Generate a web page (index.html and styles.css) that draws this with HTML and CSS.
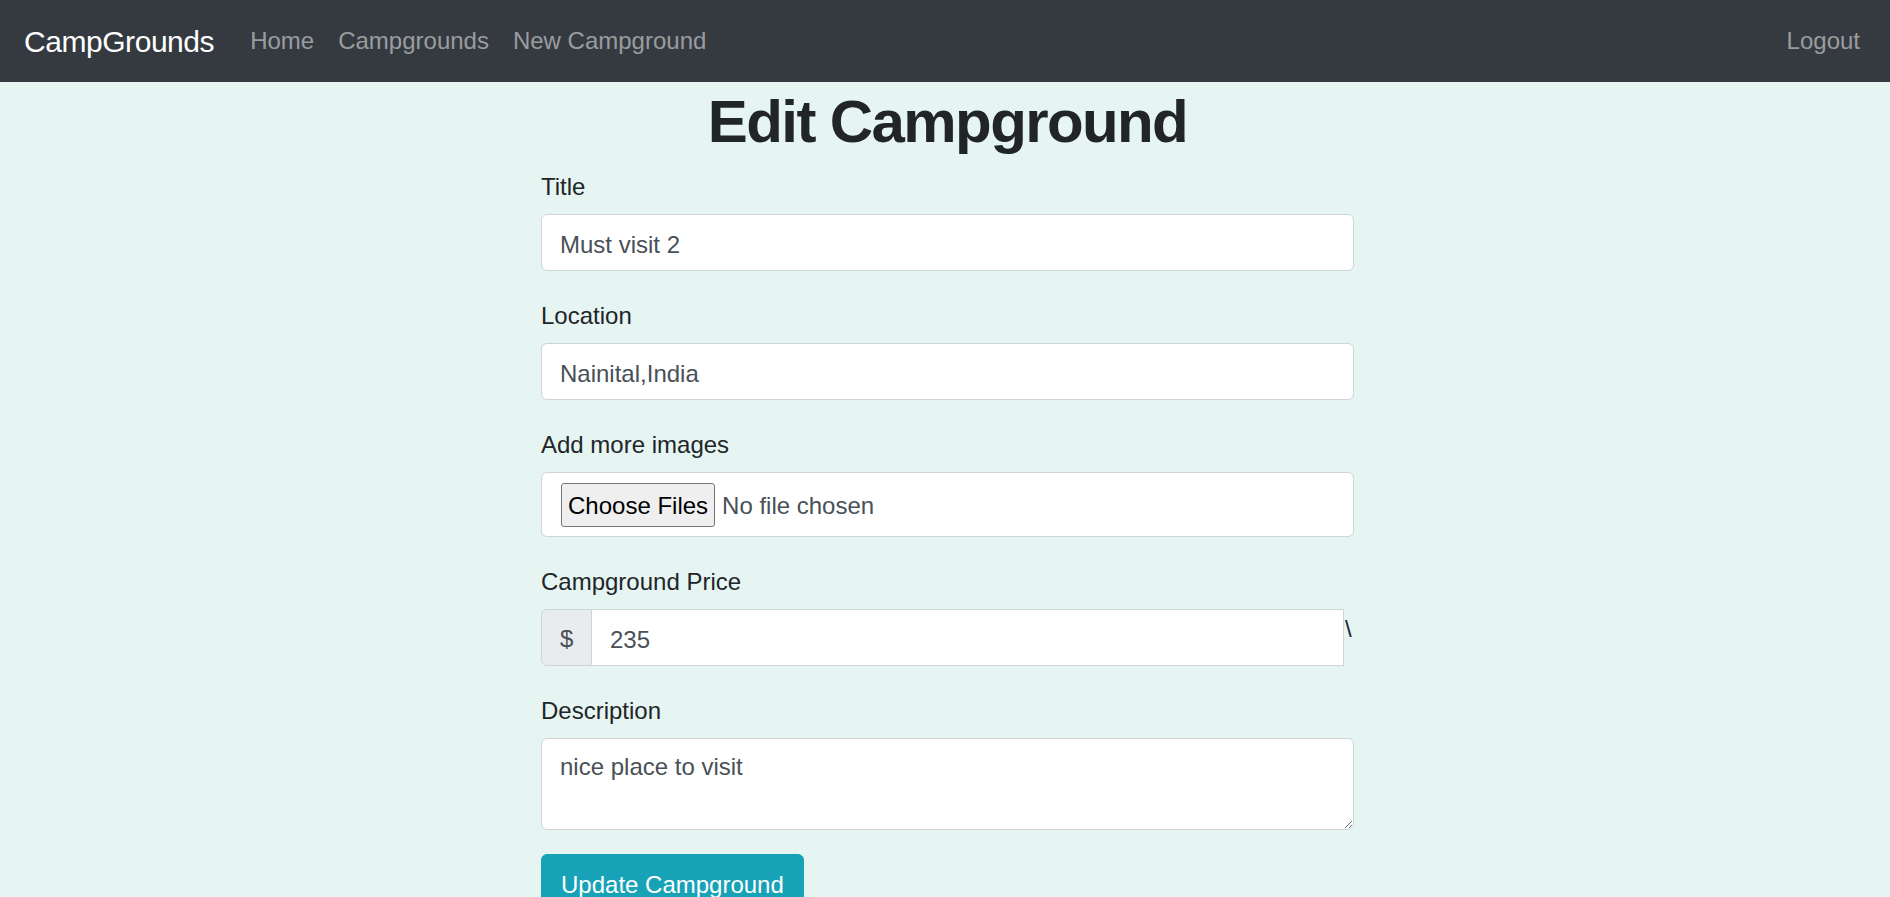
FILE: index.html
```html
<!DOCTYPE html>
<html lang="en">
<head>
<meta charset="utf-8">
<title>Edit Campground</title>
<link rel="stylesheet" href="styles.css">
</head>
<body>
<nav class="navbar">
  <a class="brand" href="#">CampGrounds</a>
  <div class="nav-links">
    <a class="nav-link" href="#">Home</a>
    <a class="nav-link" href="#">Campgrounds</a>
    <a class="nav-link" href="#">New Campground</a>
  </div>
  <div class="nav-right">
    <a class="nav-link" href="#">Logout</a>
  </div>
</nav>
<main class="page">
  <h1 class="page-title">Edit Campground</h1>
  <form class="form">
    <div class="group">
      <label class="label" for="title">Title</label>
      <input class="control" id="title" type="text" value="Must visit 2">
    </div>
    <div class="group">
      <label class="label" for="location">Location</label>
      <input class="control" id="location" type="text" value="Nainital,India">
    </div>
    <div class="group">
      <label class="label">Add more images</label>
      <div class="control file-control">
        <span class="file-btn">Choose Files</span>
        <span class="file-text">No file chosen</span>
      </div>
    </div>
    <div class="group">
      <label class="label" for="price">Campground Price</label>
      <div class="input-group">
        <span class="addon">$</span>
        <input class="control group-input" id="price" type="text" value="235">
        <span class="stray">\</span>
      </div>
    </div>
    <div class="group">
      <label class="label" for="description">Description</label>
      <textarea class="control textarea" id="description">nice place to visit</textarea>
    </div>
    <div class="group">
      <button class="btn-info" type="button">Update Campground</button>
    </div>
  </form>
</main>
</body>
</html>
```

FILE: styles.css
```css
* { box-sizing: border-box; }

html, body { margin: 0; }

body {
  font-family: "Liberation Sans", Arial, sans-serif;
  font-size: 24px;
  line-height: 1.5;
  color: #212529;
  background: #e6f5f2;
  overflow: hidden;
}

a { text-decoration: none; }

.navbar {
  height: 82px;
  background: #343a40;
  display: flex;
  align-items: center;
  padding: 0 24px;
}

.brand {
  color: #fff;
  font-size: 30px;
  line-height: 45px;
  letter-spacing: -0.45px;
  margin-right: 24px;
  padding-top: 1px;
}

.nav-links { display: flex; }

.nav-right { margin-left: auto; margin-right: -6px; }

.nav-link {
  color: rgba(255, 255, 255, 0.5);
  padding: 0 12px;
  line-height: 36px;
  display: block;
}

.page { padding-left: 5px; }

.page-title {
  margin: 0 0 12px;
  padding-top: 4px;
  height: 72px;
  font-size: 60px;
  line-height: 72px;
  font-weight: 700;
  letter-spacing: -1.6px;
  text-align: center;
}

.form {
  width: 813px;
  margin: 0 auto;
}

.group { margin-bottom: 24px; }

.label {
  display: block;
  height: 36px;
  padding-top: 3px;
  margin-bottom: 12px;
  line-height: 36px;
}

.control {
  display: block;
  width: 100%;
  height: 57px;
  padding: 11px 18px 7px;
  font-family: inherit;
  font-size: 24px;
  line-height: 36px;
  color: #495057;
  background: #fff;
  border: 1px solid #ced4da;
  border-radius: 6px;
  outline: none;
}

.file-control {
  height: 65px;
  padding: 10px 18px 9px 19px;
  display: flex;
  align-items: center;
  gap: 7px;
}

.file-btn {
  height: 44px;
  padding: 0 6px;
  display: flex;
  align-items: center;
  padding-top: 2px;
  color: #000;
  background: #efefef;
  border: 1px solid #767676;
  border-radius: 3px;
}

.file-text { color: #495057; padding-top: 2px; }

.input-group {
  display: flex;
  align-items: stretch;
}

.addon {
  width: 51px;
  height: 57px;
  padding: 11px 0 0 18px;
  line-height: 36px;
  color: #495057;
  background: #e9ecef;
  border: 1px solid #ced4da;
  border-radius: 6px 0 0 6px;
}

.group-input {
  flex: 1;
  width: auto;
  min-width: 0;
  margin-left: -1px;
  border-radius: 0;
}

.stray {
  width: 10px;
  padding-left: 1px;
  padding-top: 2px;
  line-height: 36px;
}

.textarea {
  height: 92px;
  padding-top: 10px;
  resize: vertical;
}

.btn-info {
  display: inline-block;
  height: 57px;
  padding: 11px 19px 7px;
  font-family: inherit;
  font-size: 24px;
  line-height: 36px;
  color: #fff;
  background: #17a2b8;
  border: 1px solid #17a2b8;
  border-radius: 6px;
}
```
